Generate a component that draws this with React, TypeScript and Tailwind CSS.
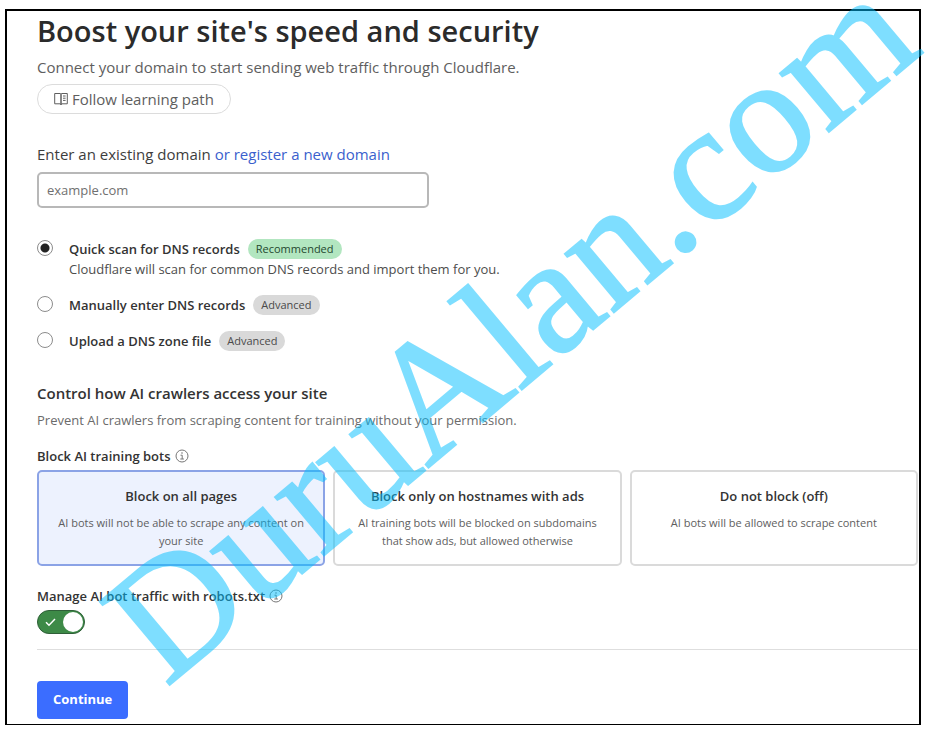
import React, { useState } from "react";

const scanOptions = [
  {
    id: "quick",
    title: "Quick scan for DNS records",
    badge: "Recommended",
    badgeClass: "bg-[#b2e6c0] text-[#24482f]",
    description: "Cloudflare will scan for common DNS records and import them for you.",
  },
  {
    id: "manual",
    title: "Manually enter DNS records",
    badge: "Advanced",
    badgeClass: "bg-[#d9d9d9] text-[#4a4a4a]",
  },
  {
    id: "upload",
    title: "Upload a DNS zone file",
    badge: "Advanced",
    badgeClass: "bg-[#d9d9d9] text-[#4a4a4a]",
  },
];

const botOptions = [
  {
    id: "all",
    title: "Block on all pages",
    description: "AI bots will not be able to scrape any content on your site",
  },
  {
    id: "ads",
    title: "Block only on hostnames with ads",
    description: "AI training bots will be blocked on subdomains that show ads, but allowed otherwise",
  },
  {
    id: "off",
    title: "Do not block (off)",
    description: "AI bots will be allowed to scrape content",
  },
];

function BookIcon() {
  return (
    <svg width="14" height="14" viewBox="0 0 14 14" fill="none" stroke="currentColor" aria-hidden="true">
      <path d="M.7 1.500H6c.6 0 1 .3 1 .8v10.400c0-.5-.4-.9-1-.9H.7zM13.300 1.500H8c-.6 0-1 .3-1 .8v10.400c0-.5.4-.9 1-.9h5.300z" />
      <path d="M9 4h2.600M9 6.200h2.600M9 8.400h2.600" />
    </svg>
  );
}

function InfoIcon() {
  return (
    <svg width="14" height="14" viewBox="0 0 14 14" fill="none" stroke="#777777" aria-hidden="true">
      <circle cx="7" cy="7" r="6" />
      <path d="M5.500 6.200H7.200V10M5.300 10h3.600" />
      <circle cx="7" cy="4" r="0.800" fill="#777777" stroke="none" />
    </svg>
  );
}

function ScanOptions() {
  const [selected, setSelected] = useState("quick");

  return (
    <div className="mt-[31px] flex flex-col gap-4">
      {scanOptions.map((option) => (
        <div key={option.id} className="flex gap-4">
          <input
            type="radio"
            id={option.id}
            name="scan"
            checked={selected === option.id}
            onChange={() => setSelected(option.id)}
            className="mt-px size-4 shrink-0 appearance-none rounded-full border border-[#8c8c8c] bg-white checked:bg-[radial-gradient(circle,#222222_4px,transparent_5px)]"
          />
          <div>
            <div className="flex items-center gap-2">
              <label htmlFor={option.id} className="text-[13px] leading-5 font-semibold text-[#333333]">
                {option.title}
              </label>
              <span className={`rounded-full px-2 text-[11px] leading-5 ${option.badgeClass}`}>{option.badge}</span>
            </div>
            {option.description && <p className="text-[13px] leading-5 text-[#4d4d4d]">{option.description}</p>}
          </div>
        </div>
      ))}
    </div>
  );
}

function BotOptions() {
  const [selected, setSelected] = useState("all");

  return (
    <fieldset className="mt-4">
      <legend className="flex items-center gap-1 text-[13px] leading-5 font-semibold text-[#333333]">
        Block AI training bots
        <InfoIcon />
      </legend>
      <div className="mt-1 grid grid-cols-3 gap-2">
        {botOptions.map((option) => (
          <label
            key={option.id}
            className={`rounded-[5px] border-2 px-4 py-3.5 text-center ${
              selected === option.id ? "border-[#8ba3e6] bg-[#edf2fe]" : "border-[#dadada] bg-white"
            }`}
          >
            <input
              type="radio"
              name="bots"
              checked={selected === option.id}
              onChange={() => setSelected(option.id)}
              className="sr-only"
            />
            <span className="block text-[13px] leading-5 font-semibold text-[#333333]">{option.title}</span>
            <span className="mt-2 block text-[11px] leading-[18px] text-[#5e5e5e]">{option.description}</span>
          </label>
        ))}
      </div>
    </fieldset>
  );
}

function RobotsToggle() {
  const [enabled, setEnabled] = useState(true);

  return (
    <label className="mt-5 block w-fit">
      <span className="flex items-center gap-1 text-[13px] leading-5 font-semibold text-[#333333]">
        Manage AI bot traffic with robots.txt
        <InfoIcon />
      </span>
      <input
        type="checkbox"
        role="switch"
        checked={enabled}
        onChange={(e) => setEnabled(e.target.checked)}
        className="peer sr-only"
      />
      <span className="mt-1 flex h-6 w-12 flex-row-reverse items-center justify-between rounded-full border border-[#2f5f38] bg-[#999999] px-px peer-checked:bg-[#3d8a47]">
        <span className="size-5 rounded-full bg-white" />
        <svg width="12" height="10" viewBox="0 0 12 10" fill="none" stroke="white" strokeWidth="1.500" className="ml-1.5" aria-hidden="true">
          <path d="M1 5.200 4 8.200 10 2" />
        </svg>
      </span>
    </label>
  );
}

function Watermark() {
  return (
    <div
      aria-hidden="true"
      className="pointer-events-none absolute top-[549px] left-[166px] origin-[0_139px] -rotate-40 font-['Liberation_Serif',serif] text-[166px] leading-none whitespace-nowrap text-[#00bfff] opacity-50 [-webkit-text-stroke:2px_#00bfff]"
    >
      DuruAlan.com
    </div>
  );
}

export default function App() {
  return (
    <div className="relative min-h-screen overflow-hidden bg-white pt-[9px] pr-1 pb-2 pl-[5px] font-['Open_Sans',sans-serif]">
      <main className="border-2 border-b border-black pr-px pb-[5px] pl-[30px]">
        <h1 className="text-[29px] leading-10 font-semibold text-[#2b2b2b]">Boost your site's speed and security</h1>
        <p className="mt-1 text-[15px] leading-6 text-[#5e5e5e]">
          Connect your domain to start sending web traffic through Cloudflare.
        </p>
        <button
          type="button"
          className="mt-[5px] flex h-[30px] items-center gap-1 rounded-full border border-[#dcdcdc] px-4 text-[15px] text-[#5e5e5e]"
        >
          <BookIcon />
          Follow learning path
        </button>

        <div className="mt-7 text-[15px] leading-6 text-[#3d3d3d]">
          <label htmlFor="domain">Enter an existing domain</label>{" "}
          <a href="#register" className="text-[#3a5fcd]">
            or register a new domain
          </a>
        </div>
        <input
          id="domain"
          type="text"
          placeholder="example.com"
          className="mt-1.5 block h-9 w-[392px] max-w-full rounded-[5px] border-2 border-[#b8b8b8] px-2 text-[13px] placeholder:text-[#707070]"
        />

        <ScanOptions />

        <h2 className="mt-8 text-[15px] leading-5 font-semibold text-[#333333]">
          Control how AI crawlers access your site
        </h2>
        <p className="mt-[7px] text-[13px] leading-5 text-[#6b6b6b]">
          Prevent AI crawlers from scraping content for training without your permission.
        </p>

        <BotOptions />
        <RobotsToggle />

        <hr className="mt-[15px] border-[#dedede]" />
        <button
          type="button"
          className="mt-[31px] h-[38px] rounded-[4px] bg-[#3b6dff] px-4 text-[13px] font-bold text-white"
        >
          Continue
        </button>
      </main>
      <Watermark />
    </div>
  );
}
